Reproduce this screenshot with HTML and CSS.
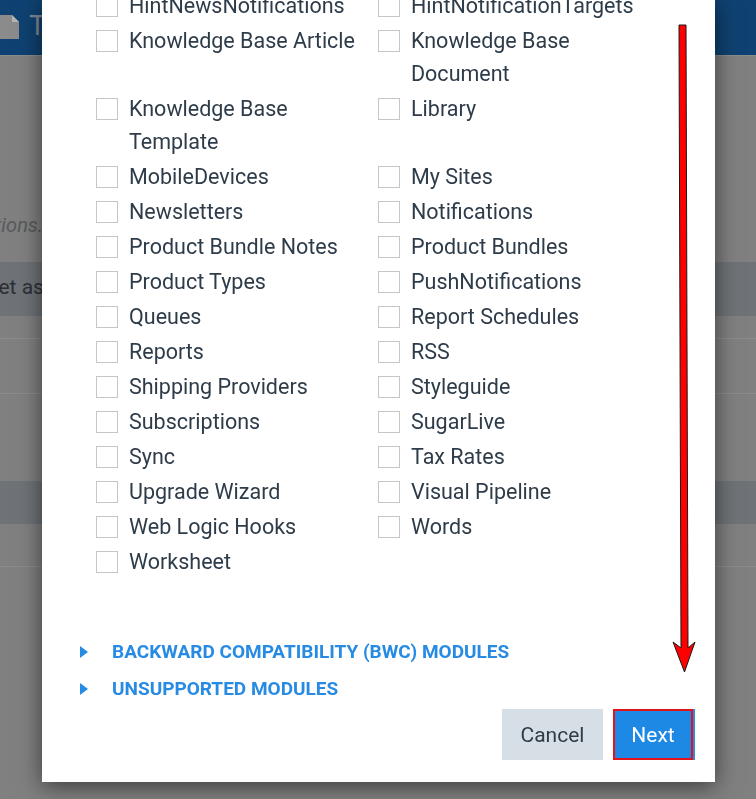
FILE: index.html
```html
<!DOCTYPE html>
<html lang="en">
<head>
<meta charset="utf-8">
<title>Modules</title>
<link rel="stylesheet" href="styles.css">
</head>
<body>
<div class="page">
  <header class="topbar">
    <svg class="file-icon" width="19" height="24" viewBox="0 0 19 24"><path d="M0 0H12L19 7V24H0Z" fill="#8b8b8b"/><path d="M12 0V7H19Z" fill="#b4b4b4"/></svg>
    <span class="topbar-title">Tools</span>
  </header>
  <p class="bg-note">tions.</p>
  <div class="bg-band"><span class="bg-text">Set as</span></div>
  <div class="bg-row bg-row-a"></div>
  <div class="bg-row bg-row-b"></div>
  <div class="bg-band bg-band-low"></div>
  <div class="bg-row bg-row-c"></div>
</div>

<div class="modal">
  <div class="module-grid">
    <label class="item"><span class="box"></span><span class="name">HintNewsNotifications</span></label>
    <label class="item"><span class="box"></span><span class="name">HintNotificationTargets</span></label>
    <label class="item"><span class="box"></span><span class="name">Knowledge Base Article</span></label>
    <label class="item"><span class="box"></span><span class="name">Knowledge Base Document</span></label>
    <label class="item"><span class="box"></span><span class="name">Knowledge Base Template</span></label>
    <label class="item"><span class="box"></span><span class="name">Library</span></label>
    <label class="item"><span class="box"></span><span class="name">MobileDevices</span></label>
    <label class="item"><span class="box"></span><span class="name">My Sites</span></label>
    <label class="item"><span class="box"></span><span class="name">Newsletters</span></label>
    <label class="item"><span class="box"></span><span class="name">Notifications</span></label>
    <label class="item"><span class="box"></span><span class="name">Product Bundle Notes</span></label>
    <label class="item"><span class="box"></span><span class="name">Product Bundles</span></label>
    <label class="item"><span class="box"></span><span class="name">Product Types</span></label>
    <label class="item"><span class="box"></span><span class="name">PushNotifications</span></label>
    <label class="item"><span class="box"></span><span class="name">Queues</span></label>
    <label class="item"><span class="box"></span><span class="name">Report Schedules</span></label>
    <label class="item"><span class="box"></span><span class="name">Reports</span></label>
    <label class="item"><span class="box"></span><span class="name">RSS</span></label>
    <label class="item"><span class="box"></span><span class="name">Shipping Providers</span></label>
    <label class="item"><span class="box"></span><span class="name">Styleguide</span></label>
    <label class="item"><span class="box"></span><span class="name">Subscriptions</span></label>
    <label class="item"><span class="box"></span><span class="name">SugarLive</span></label>
    <label class="item"><span class="box"></span><span class="name">Sync</span></label>
    <label class="item"><span class="box"></span><span class="name">Tax Rates</span></label>
    <label class="item"><span class="box"></span><span class="name">Upgrade Wizard</span></label>
    <label class="item"><span class="box"></span><span class="name">Visual Pipeline</span></label>
    <label class="item"><span class="box"></span><span class="name">Web Logic Hooks</span></label>
    <label class="item"><span class="box"></span><span class="name">Words</span></label>
    <label class="item"><span class="box"></span><span class="name">Worksheet</span></label>
  </div>

  <div class="sections">
    <div class="section-link"><span class="caret"></span><span>BACKWARD COMPATIBILITY (BWC) MODULES</span></div>
    <div class="section-link"><span class="caret"></span><span>UNSUPPORTED MODULES</span></div>
  </div>

  <div class="footer">
    <button class="btn btn-cancel">Cancel</button>
    <button class="btn btn-next">Next</button>
  </div>
</div>

<svg class="arrow" width="756" height="799" viewBox="0 0 756 799">
  <polygon points="679,25 686,25 688,648 695,642 684.5,672 673,642 681,648" fill="#ff0000" stroke="#1a1a1a" stroke-width="1" stroke-linejoin="miter"/>
</svg>
</body>
</html>
```

FILE: styles.css
```css
html, body {
  margin: 0;
  padding: 0;
  height: 100%;
  overflow: hidden;
}

body {
  font-family: Roboto, "Liberation Sans", Arial, sans-serif;
  background: #808080;
}

.page {
  height: 799px;
  background: #808080;
}

.topbar {
  height: 55px;
  background: #0f4272;
  display: flex;
  align-items: center;
  gap: 10px;
  border-bottom: 1px solid #8c8c8c;
}

.file-icon {
  flex-shrink: 0;
  margin-top: -2px;
}

.topbar-title {
  font-size: 28px;
  color: #7f8a96;
  margin-top: -4px;
}

.bg-note {
  margin: 154px 0 0;
  font-size: 20px;
  line-height: 30px;
  font-style: italic;
  color: #575a5d;
  text-indent: -5px;
  white-space: nowrap;
}

.bg-band {
  margin-top: 22px;
  height: 54px;
  background: #6f7377;
  display: flex;
  align-items: center;
}

.bg-band-low {
  margin-top: 87px;
  height: 43px;
}

.bg-text {
  font-size: 21px;
  color: #2c3036;
  text-indent: -14px;
  white-space: nowrap;
  margin-top: -4px;
}

.bg-row {
  border-bottom: 1px solid #8c8c8c;
}

.bg-row-a {
  height: 22px;
}

.bg-row-b {
  height: 54px;
}

.bg-row-c {
  height: 42px;
}

.modal {
  position: fixed;
  left: 42px;
  top: 0;
  width: 673px;
  height: 782px;
  background: #ffffff;
  box-shadow: 0 4px 22px rgba(0, 0, 0, 0.55);
  box-sizing: border-box;
  padding: 0 22px 22px 38px;
  display: flex;
  flex-direction: column;
  overflow: hidden;
}

.module-grid {
  margin: -11px 0 0 16px;
  display: grid;
  grid-template-columns: 282px 282px;
  row-gap: 2px;
}

.item {
  display: flex;
  gap: 11px;
  font-size: 21.5px;
  line-height: 33px;
  color: #2e3c4a;
  padding-right: 12px;
}

.box {
  flex-shrink: 0;
  width: 22px;
  height: 22px;
  box-sizing: border-box;
  border: 1px solid #c4c6c8;
  background: #ffffff;
  margin-top: 6px;
}

.sections {
  margin-top: 55px;
  display: flex;
  flex-direction: column;
}

.section-link {
  height: 37px;
  display: flex;
  align-items: center;
  gap: 24px;
  font-size: 19px;
  font-weight: 700;
  color: #278be4;
}

.caret {
  width: 0;
  height: 0;
  border-left: 8px solid #278be4;
  border-top: 6.5px solid transparent;
  border-bottom: 6.5px solid transparent;
}

.footer {
  margin-top: auto;
  display: flex;
  justify-content: flex-end;
  gap: 10px;
}

.btn {
  height: 51px;
  border: none;
  font-family: Roboto, "Liberation Sans", Arial, sans-serif;
  font-size: 21px;
  padding: 0;
  cursor: pointer;
}

.btn-cancel {
  width: 101px;
  background: #d7dfe6;
  color: #2f3b47;
}

.btn-next {
  width: 80px;
  background: #1e88e5;
  color: #ffffff;
  border: 2px solid #e3121b;
  box-sizing: border-box;
  box-shadow: 2px 0 0 #2a8ae6;
}

.arrow {
  position: fixed;
  left: 0;
  top: 0;
  pointer-events: none;
}
```
